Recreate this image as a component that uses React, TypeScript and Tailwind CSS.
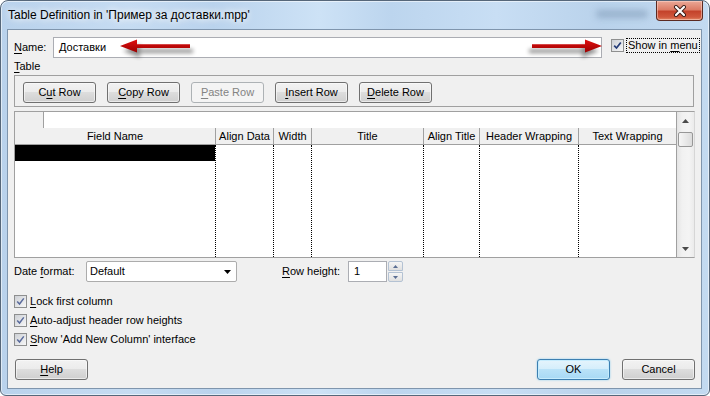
import type { ReactNode } from "react";

function U({ children }: { children: ReactNode }) {
  return <span className="underline decoration-1 underline-offset-[2px]">{children}</span>;
}

function Button({
  children,
  disabled = false,
  primary = false,
  className = "",
}: {
  children: ReactNode;
  disabled?: boolean;
  primary?: boolean;
  className?: string;
}) {
  const look = disabled
    ? "border-[#adb2b5] bg-[#f4f4f4] text-[#838383]"
    : primary
      ? "border-[#3c7fb1] bg-[linear-gradient(to_bottom,#e5f4fc_0%,#d4eefb_49%,#b9e2f8_50%,#a7d9f5_100%)] text-black shadow-[inset_0_0_0_1px_#c6ecfd,0_0_2px_#7ec8ee]"
      : "border-[#707070] bg-[linear-gradient(to_bottom,#f2f2f2_0%,#ebebeb_49%,#dddddd_50%,#cfcfcf_100%)] text-black shadow-[inset_0_0_0_1px_#fbfbfb99]";
  return (
    <button
      type="button"
      className={`flex h-[21px] w-[73px] shrink-0 items-center justify-center rounded-[3px] border leading-none ${look} ${className}`}
    >
      {children}
    </button>
  );
}

function Check({ dark = false }: { dark?: boolean }) {
  return (
    <span className="flex h-[13px] w-[13px] shrink-0 items-center justify-center border border-[#8e8f8f] bg-[#f4f4f4]">
      <span className="flex h-[11px] w-[11px] items-center justify-center bg-[linear-gradient(135deg,#cdd0d5,#f7f7f7)]">
        <svg width="9" height="9" viewBox="0 0 9 9">
          <path
            d="M1.2 4.6 L3.5 7 L7.8 1.4"
            fill="none"
            stroke={dark ? "#253c78" : "#5a6b9c"}
            strokeWidth={dark ? 1.7 : 1.5}
          />
        </svg>
      </span>
    </span>
  );
}

function Arrow({ dir, id }: { dir: "left" | "right"; id: string }) {
  // drawn pointing left, mirrored for the right one
  const shape = "M4 10 L21 3.5 L21 8.2 L74 8.2 L74 12 L21 12 L21 16.5 Z";
  return (
    <svg width="84" height="26" viewBox="0 0 84 26" className={dir === "right" ? "-scale-x-100" : ""}>
      <defs>
        <filter id={`${id}-blur`} x="-20%" y="-50%" width="140%" height="200%">
          <feGaussianBlur stdDeviation="2" />
        </filter>
        <linearGradient id={`${id}-fill`} x1="0" y1="0" x2="0" y2="1">
          <stop offset="0" stopColor="#e01010" />
          <stop offset="1" stopColor="#9c0000" />
        </linearGradient>
      </defs>
      <path d={shape} transform="translate(3 5)" fill="#000" opacity="0.45" filter={`url(#${id}-blur)`} />
      <path d={shape} fill={`url(#${id}-fill)`} />
    </svg>
  );
}

const cols = [
  { name: "Field Name", w: "w-[201px]" },
  { name: "Align Data", w: "w-[58px]" },
  { name: "Width", w: "w-[38px]" },
  { name: "Title", w: "w-[112px]" },
  { name: "Align Title", w: "w-[56px]" },
  { name: "Header Wrapping", w: "w-[99px]" },
];

export default function App() {
  return (
    <div className="relative flex h-[396px] w-[710px] flex-col overflow-hidden rounded-t-[8px] rounded-b-[6px] border border-[#56677a] bg-[linear-gradient(90deg,#b9d2ec_0%,#c6dcf2_18%,#bad3ed_30%,#cde2f6_45%,#bcd5ee_55%,#c8def4_70%,#b9d2eb_85%,#c3daf1_100%)] font-['Liberation_Sans',Arial,sans-serif] text-[11px] text-black shadow-[inset_0_0_0_1px_rgba(255,255,255,0.55)]">
      <div className="pointer-events-none absolute left-[595px] top-[9px] h-[8px] w-[52px] rounded-full bg-[#8aa4c0] opacity-70 blur-[3px]" />

      {/* title bar */}
      <div className="flex h-[28px] shrink-0 items-center pl-[7px]">
        <span className="text-[12px] [text-shadow:0_0_6px_#fff,0_0_10px_#fff]">
          Table Definition in 'Пример за доставки.mpp'
        </span>
      </div>
      <div className="absolute right-[6px] top-0 flex h-[20px] w-[47px] items-center justify-center rounded-b-[4px] border border-t-0 border-[#5b2a22] bg-[linear-gradient(to_bottom,#eaa897_0%,#dc7c66_45%,#c4432b_55%,#d0583d_85%,#e28a66_100%)] shadow-[inset_0_0_0_1px_rgba(255,220,210,0.5)]">
        <svg width="14" height="12" viewBox="0 0 14 12">
          <path d="M3 2 L11 10 M11 2 L3 10" stroke="#3a1d18" strokeWidth="4" strokeLinecap="round" />
          <path d="M3 2 L11 10 M11 2 L3 10" stroke="#fff" strokeWidth="2.2" strokeLinecap="round" />
        </svg>
      </div>

      {/* client area */}
      <div className="ml-[6px] mr-[7px] flex h-[360px] shrink-0 flex-col border border-[#7f95ad] bg-[#f0f0f0] pl-[6px] pr-[6px]">
        <div className="relative mt-[7px] flex h-[21px] shrink-0">
          <span className="flex w-[39px] shrink-0 items-center">
            <U>N</U>ame:
          </span>
          <div className="flex h-[21px] w-[549px] shrink-0 items-center border border-[#abadb3] bg-white pl-[5px]">
            Доставки
          </div>
          <div className="ml-[9px] mt-[2px] shrink-0 self-start">
            <Check dark />
          </div>
          <span className="ml-[2px] mt-[1px] h-[15px] shrink-0 self-start whitespace-nowrap border border-dotted border-black px-[1px] leading-[13px]">
            Show in <U>m</U>enu
          </span>
          <div className="pointer-events-none absolute left-[102px] top-[-1px]">
            <Arrow dir="left" id="al" />
          </div>
          <div className="pointer-events-none absolute left-[508px] top-[-1px]">
            <Arrow dir="right" id="ar" />
          </div>
        </div>

        <div className="mt-[1px] h-[14px] shrink-0 leading-[14px]">
          <U>T</U>able
        </div>

        <div className="mr-[1px] mt-[2px] flex h-[32px] shrink-0 gap-[11px] border border-[#a0a0a0] pl-[8px] pt-[6px]">
          <Button>
            C<U>u</U>t Row
          </Button>
          <Button>
            <U>C</U>opy Row
          </Button>
          <Button disabled>
            <U>P</U>aste Row
          </Button>
          <Button>
            <U>I</U>nsert Row
          </Button>
          <Button>
            <U>D</U>elete Row
          </Button>
        </div>

        {/* grid */}
        <div className="mt-[4px] flex h-[147px] shrink-0 border border-[#a0a0a0] border-r-[#d6d6d6] bg-white">
          <div className="flex flex-1 flex-col border-r border-[#a0a0a0]">
            <div className="flex h-[16px] shrink-0">
              <div className="w-[29px] border-r border-[#a0a0a0] bg-[#f0f0f0]" />
              <div className="flex-1 bg-white" />
            </div>
            <div className="flex h-[17px] shrink-0 border-b border-[#a0a0a0] bg-[#f0f0f0] leading-[16px]">
              {cols.map((c) => (
                <div key={c.name} className={`${c.w} shrink-0 border-r border-[#a0a0a0] text-center`}>
                  {c.name}
                </div>
              ))}
              <div className="flex-1 text-center">Text Wrapping</div>
            </div>
            <div className="flex flex-1">
              {cols.map((c, i) => (
                <div key={c.name} className={`${c.w} shrink-0 border-r border-dotted border-r-black`}>
                  {i === 0 && <div className="h-[16px] bg-black" />}
                </div>
              ))}
              <div className="flex-1" />
            </div>
          </div>
          <div className="flex w-[17px] shrink-0 flex-col bg-[linear-gradient(90deg,#e4e4e4,#f1f1f1_30%,#f4f4f4_70%,#ebebeb)]">
            <div className="flex h-[17px] shrink-0 items-center justify-center">
              <svg width="7" height="4" viewBox="0 0 7 4">
                <path d="M3.5 0 L7 4 L0 4 Z" fill="#4a4a4a" />
              </svg>
            </div>
            <div className="mx-[1px] mt-[3px] h-[15px] shrink-0 rounded-[2px] border border-[#979797] bg-[linear-gradient(90deg,#f6f6f6,#e9e9e9_50%,#dcdcdc)]" />
            <div className="flex-1" />
            <div className="flex h-[17px] shrink-0 items-center justify-center">
              <svg width="7" height="4" viewBox="0 0 7 4">
                <path d="M0 0 L7 0 L3.5 4 Z" fill="#4a4a4a" />
              </svg>
            </div>
          </div>
        </div>

        {/* date format / row height */}
        <div className="mt-[3px] flex h-[21px] shrink-0 items-center">
          <span className="w-[72px]">
            Date <U>f</U>ormat:
          </span>
          <div className="flex h-[21px] w-[151px] items-center justify-between rounded-[2px] border border-[#acacac] bg-white pl-[3px] pr-[5px]">
            <span>Default</span>
            <svg width="7" height="4" viewBox="0 0 7 4">
              <path d="M0 0 L7 0 L3.5 4 Z" fill="#000" />
            </svg>
          </div>
          <span className="ml-[45px] w-[66px]">
            <U>R</U>ow height:
          </span>
          <div className="flex h-[21px] w-[39px] items-center border border-[#abadb3] bg-white pl-[5px]">1</div>
          <div className="ml-[1px] flex h-[21px] w-[15px] flex-col">
            <div className="flex h-[10px] items-center justify-center rounded-t-[2px] border border-[#b4c2d3] bg-[linear-gradient(to_bottom,#f5f5f5,#e0e0e0)]">
              <svg width="5" height="3" viewBox="0 0 5 3">
                <path d="M2.5 0 L5 3 L0 3 Z" fill="#5a6e93" />
              </svg>
            </div>
            <div className="mt-[1px] flex h-[10px] items-center justify-center rounded-b-[2px] border border-[#b4c2d3] bg-[linear-gradient(to_bottom,#f5f5f5,#e0e0e0)]">
              <svg width="5" height="3" viewBox="0 0 5 3">
                <path d="M0 0 L5 0 L2.5 3 Z" fill="#5a6e93" />
              </svg>
            </div>
          </div>
        </div>

        {/* options */}
        <div className="mt-[10px] flex shrink-0 flex-col">
          <label className="flex h-[19px] items-center gap-[3px]">
            <Check />
            <span>
              <U>L</U>ock first column
            </span>
          </label>
          <label className="flex h-[19px] items-center gap-[3px]">
            <Check />
            <span>
              <U>A</U>uto-adjust header row heights
            </span>
          </label>
          <label className="flex h-[19px] items-center gap-[3px]">
            <Check />
            <span>
              <U>S</U>how 'Add New Column' interface
            </span>
          </label>
        </div>

        <div className="mt-[10px] flex shrink-0">
          <Button className="ml-[1px]">
            <U>H</U>elp
          </Button>
          <Button primary className="ml-auto">
            OK
          </Button>
          <Button className="ml-[12px]">Cancel</Button>
        </div>
      </div>
    </div>
  );
}
